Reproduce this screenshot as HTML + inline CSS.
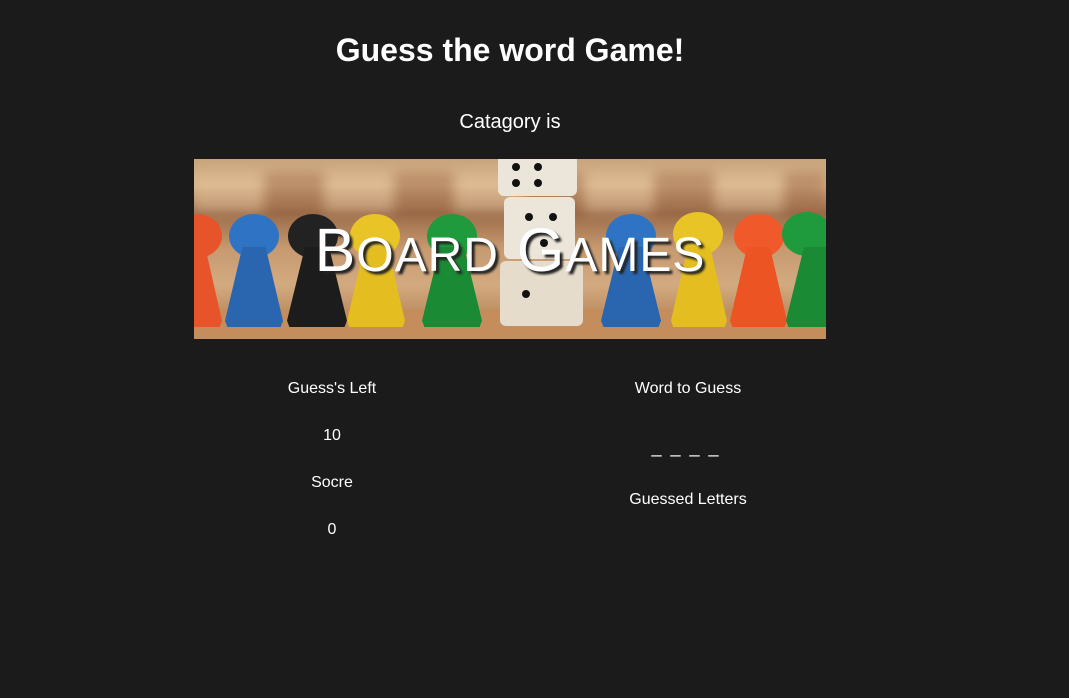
<!DOCTYPE html>
<html><head><style>
body{margin:0;background:#1b1b1b;width:1069px;height:698px;overflow:hidden;font-family:"Liberation Sans",sans-serif;color:#fff;position:relative}
.t{position:absolute;transform:translateX(-50%);white-space:nowrap}
#ban{position:absolute;left:194px;top:159px;width:632px;height:180px;overflow:hidden;
background:linear-gradient(180deg,#c9a57e 0%,#d8b48a 15%,#9a6a48 30%,#c79a70 50%,#d3aa80 70%,#b98a5c 88%,#c49164 100%)}
.h{position:absolute;border-radius:50%;width:50px;height:44px;top:55px}
.b{position:absolute;clip-path:polygon(30% 0,70% 0,100% 92%,96% 100%,4% 100%,0 92%);top:88px;height:80px}
.die{position:absolute;background:#ece6da;border-radius:6px}
.dot{position:absolute;width:8px;height:8px;border-radius:50%;background:#111}
</style></head><body>
<div class="t" style="left:510px;top:32px;font-size:32px;font-weight:bold">Guess the word Game!</div>
<div class="t" style="left:510px;top:111px;font-size:20px">Catagory is</div>
<div id="ban">
<div style="position:absolute;left:0;top:14px;width:632px;height:40px;background:repeating-linear-gradient(90deg,#e2c29c 0 70px,#9a6442 70px 130px);opacity:.45;filter:blur(6px)"></div>
<div style="position:absolute;left:0;top:150px;width:632px;height:30px;background:#c58d5c"></div>
<div class="die" style="left:304px;top:-4px;width:79px;height:41px"></div>
<div class="die" style="left:310px;top:38px;width:71px;height:62px"></div>
<div class="die" style="left:306px;top:102px;width:83px;height:65px;background:#e6dccb"></div>
<div class="dot" style="left:318px;top:4px"></div><div class="dot" style="left:340px;top:4px"></div>
<div class="dot" style="left:318px;top:20px"></div><div class="dot" style="left:340px;top:20px"></div>
<div class="dot" style="left:331px;top:54px"></div><div class="dot" style="left:355px;top:54px"></div>
<div class="dot" style="left:346px;top:80px"></div><div class="dot" style="left:328px;top:131px"></div>
<div class="h" style="left:-22px;background:#e8542a"></div><div class="b" style="left:-28px;width:56px;background:#e8542a"></div>
<div class="h" style="left:35px;background:#2f74c4"></div><div class="b" style="left:31px;width:58px;background:#2a66b0"></div>
<div class="h" style="left:94px;background:#222"></div><div class="b" style="left:93px;width:60px;background:#1c1c1c"></div>
<div class="h" style="left:156px;background:#e8c427"></div><div class="b" style="left:153px;width:58px;background:#e4be20"></div>
<div class="h" style="left:233px;background:#1f9a3c"></div><div class="b" style="left:228px;width:60px;background:#1a8a34"></div>
<div class="h" style="left:412px;background:#2f74c4"></div><div class="b" style="left:407px;width:60px;background:#2a66b0"></div>
<div class="h" style="left:479px;top:53px;background:#e8c427"></div><div class="b" style="left:477px;width:56px;background:#e4be20"></div>
<div class="h" style="left:540px;background:#f0592a"></div><div class="b" style="left:536px;width:57px;background:#ec5424"></div>
<div class="h" style="left:588px;top:53px;background:#1f9a3c"></div><div class="b" style="left:592px;width:60px;background:#1a8a34"></div>
<div style="position:absolute;left:0;top:56px;width:632px;text-align:center;font-size:61px;color:#fff;letter-spacing:1px;text-shadow:3px 3px 2px #222">B<span style="font-size:48px">OARD</span> G<span style="font-size:48px">AMES</span></div>
</div>
<div class="t" style="left:332px;top:380px;font-size:16px">Guess's Left</div>
<div class="t" style="left:332px;top:427px;font-size:16px">10</div>
<div class="t" style="left:332px;top:474px;font-size:16px">Socre</div>
<div class="t" style="left:332px;top:521px;font-size:16px">0</div>
<div class="t" style="left:688px;top:380px;font-size:16px">Word to Guess</div>
<div class="t" style="left:686px;top:437px;font-size:18px;letter-spacing:2px">_ _ _ _</div>
<div class="t" style="left:688px;top:491px;font-size:16px">Guessed Letters</div>
</body></html>
